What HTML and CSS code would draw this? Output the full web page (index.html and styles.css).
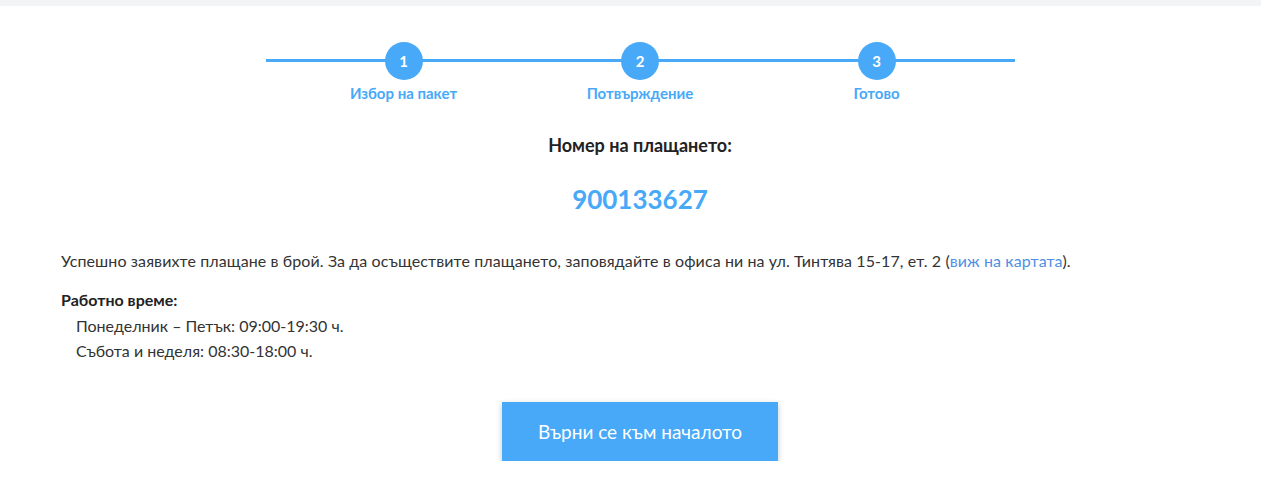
FILE: index.html
```html
<!DOCTYPE html>
<html lang="bg">
<head>
<meta charset="utf-8">
<title>Плащане</title>
<link rel="stylesheet" href="styles.css">
</head>
<body>
<div class="topbar"></div>
<main class="page">
  <div class="stepper">
    <div class="step">
      <span class="step-num">1</span>
      <span class="step-label">Избор на пакет</span>
    </div>
    <div class="step">
      <span class="step-num">2</span>
      <span class="step-label">Потвърждение</span>
    </div>
    <div class="step">
      <span class="step-num">3</span>
      <span class="step-label">Готово</span>
    </div>
  </div>

  <h2 class="pay-title">Номер на плащането:</h2>
  <div class="pay-number">900133627</div>

  <p class="message">Успешно заявихте плащане в брой. За да осъществите плащането, заповядайте в офиса ни на ул. Тинтява 15-17, ет. 2 (<a href="#" class="map-link">виж на картата</a>).</p>

  <div class="hours">
    <div class="hours-title">Работно време:</div>
    <div class="hours-line">Понеделник – Петък: 09:00-19:30 ч.</div>
    <div class="hours-line">Събота и неделя: 08:30-18:00 ч.</div>
  </div>

  <div class="actions">
    <a href="#" class="btn">Върни се към началото</a>
  </div>
</main>
</body>
</html>
```

FILE: styles.css
```css
* { box-sizing: border-box; }
html, body { margin: 0; padding: 0; background: #fff; }
body {
  font-family: Lato, "Open Sans", "Liberation Sans", sans-serif;
  color: #333;
  font-size: 16px;
}
.topbar { height: 6px; background: #f3f4f6; }

.page {
  width: 1158px;
  margin-left: 61px;
  padding-top: 36px;
}

.stepper {
  position: relative;
  width: 749px;
  margin: 0 auto;
  display: flex;
  justify-content: center;
}
.stepper::before {
  content: "";
  position: absolute;
  left: 0; right: 0;
  top: 17px;
  height: 3px;
  background: #47a9f8;
}
.step {
  position: relative;
  width: 236.5px;
  display: flex;
  flex-direction: column;
  align-items: center;
}
.step-num {
  width: 38px; height: 38px;
  border-radius: 50%;
  background: #47a9f8;
  color: #fff;
  font-weight: 700;
  font-size: 15px;
  display: flex; align-items: center; justify-content: center;
}
.step-label {
  margin-top: 3px;
  color: #47a9f8;
  font-weight: 700;
  font-size: 15px;
  line-height: 20px;
}

.pay-title {
  margin: 30px 0 0;
  text-align: center;
  font-size: 18px;
  font-weight: 700;
  color: #222;
  line-height: 24px;
}
.pay-number {
  margin-top: 26px;
  text-align: center;
  font-size: 26px;
  font-weight: 700;
  color: #47a9f8;
  line-height: 32px;
}

.message {
  margin: 35px 0 0;
  line-height: 22px;
  letter-spacing: 0.1px;
}
.map-link { color: #4f8fe6; text-decoration: none; }

.hours { margin-top: 15px; line-height: 25.5px; }
.hours-title { font-weight: 700; color: #222; }
.hours-line { padding-left: 15px; }

.actions {
  margin-top: 38px;
  display: flex;
  justify-content: center;
}
.btn {
  display: inline-flex;
  align-items: center;
  justify-content: center;
  width: 276px;
  height: 59px;
  background: #47a9f8;
  color: #fff;
  font-size: 19px;
  text-decoration: none;
  box-shadow: 0 2px 6px rgba(0,0,0,0.22);
}
```
